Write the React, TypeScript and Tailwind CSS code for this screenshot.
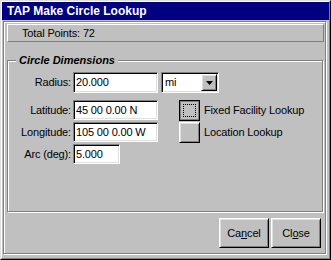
import React from "react";

const raised =
  "border border-t-white border-l-white border-r-black border-b-black shadow-[inset_1px_1px_0_#dfdfdf,inset_-1px_-1px_0_#808080] bg-[#c0c0c0]";
const sunken =
  "border border-t-[#808080] border-l-[#808080] border-r-white border-b-white shadow-[inset_1px_1px_0_#000,inset_-1px_-1px_0_#dfdfdf] bg-white";

function Field({ label, value, w, h = "h-[20px]" }: { label: string; value: string; w: string; h?: string }) {
  return (
    <div className={`flex items-center ${h}`}>
      <div className="w-[65px] text-right pr-[2px] leading-none">{label}</div>
      <div className={`${sunken} ${w} h-full flex items-center pl-[2px] leading-none`}>{value}</div>
    </div>
  );
}

export default function App() {
  return (
    <div className="w-[331px] h-[260px] bg-[#c0c0c0] border border-t-[#dfdfdf] border-l-[#dfdfdf] border-r-black border-b-black font-['Liberation_Sans',Arial,sans-serif] text-[11px] tracking-[-0.15px] text-black">
      <div className="w-full h-full border border-t-white border-l-white border-r-[#808080] border-b-[#808080]">
        <div className="h-[18px] bg-[#000080] text-white font-bold text-[12px] tracking-normal pl-[5px] flex items-center leading-none">
          TAP Make Circle Lookup
        </div>
        <div className="ml-[1px] mt-[1px] w-[323px] h-[233px] border border-[#808080] shadow-[inset_1px_1px_0_#fff,1px_1px_0_#fff]">
          <div className="ml-[3px] mt-[2px] w-[317px] h-[18px] border border-t-white border-l-white border-r-[#808080] border-b-[#808080] flex items-center pl-[14px] leading-none">
            Total Points: 72
          </div>
          <div className="relative ml-[3px] mt-[18px] w-[316px] h-[152px] border border-[#808080] shadow-[inset_1px_1px_0_#fff,1px_1px_0_#fff] pt-[11px]">
            <div className="absolute left-[8px] -top-[7px] px-[3px] bg-[#c0c0c0] font-bold italic tracking-normal leading-[13px]">
              Circle Dimensions
            </div>
            <div className="flex items-center h-[21px]">
              <Field label="Radius:" value="20.000" w="w-[85px]" h="h-[21px]" />
              <div className={`${sunken} ml-[3px] w-[58px] h-[21px] flex items-center`}>
                <div className="flex-1 pl-[3px] leading-none">mi</div>
                <div className={`${raised} w-[16px] h-[17px] mr-[1px] flex items-center justify-center`}>
                  <svg width="7" height="4" viewBox="0 0 7 4">
                    <path d="M0 0h7L3.5 4z" fill="#000" />
                  </svg>
                </div>
              </div>
            </div>
            <div className="flex mt-[7px]">
              <div className="flex flex-col gap-[2px]">
                <Field label="Latitude:" value="45 00 0.00 N" w="w-[85px]" />
                <Field label="Longitude:" value="105 00 0.00 W" w="w-[85px]" />
                <Field label="Arc (deg):" value="5.000" w="w-[47px]" />
              </div>
              <div className="ml-[21px] flex flex-col gap-[1px]">
                <div className="flex items-center h-[21px]">
                  <div className="w-[21px] h-[21px] border border-black shadow-[inset_0_0_0_1px_#808080] bg-[#c0c0c0] flex items-center justify-center">
                    <div className="w-[13px] h-[13px] border border-dotted border-black" />
                  </div>
                  <span className="ml-[4px] leading-none">Fixed Facility Lookup</span>
                </div>
                <div className="flex items-center h-[21px]">
                  <div className={`${raised} w-[21px] h-[21px]`} />
                  <span className="ml-[4px] leading-none">Location Lookup</span>
                </div>
              </div>
            </div>
          </div>
          <div className="mt-[6px] flex justify-end gap-[2px] pr-[4px]">
            <div className={`${raised} w-[50px] h-[30px] flex items-center justify-center leading-none`}>
              <span>
                Ca<span className="underline">n</span>cel
              </span>
            </div>
            <div className={`${raised} w-[50px] h-[30px] flex items-center justify-center leading-none`}>
              <span>
                Cl<span className="underline">o</span>se
              </span>
            </div>
          </div>
        </div>
      </div>
    </div>
  );
}
